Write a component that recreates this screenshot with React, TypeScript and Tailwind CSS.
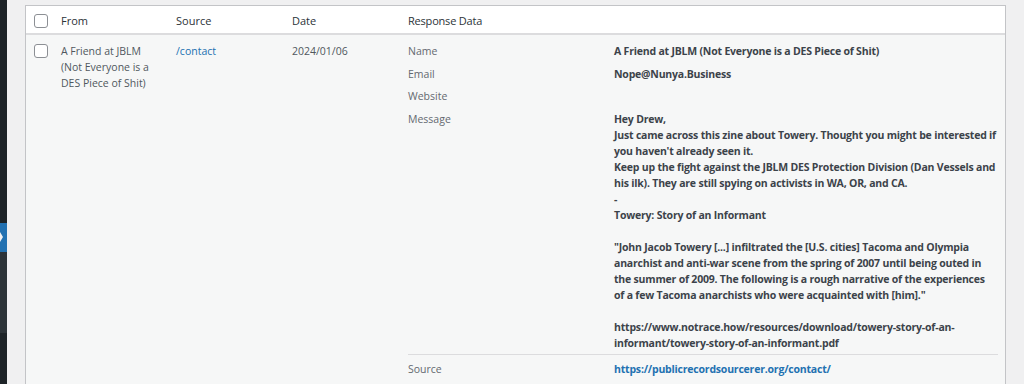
import React from "react";

const msgLines = [
  "Hey Drew,",
  "Just came across this zine about Towery. Thought you might be interested if",
  "you haven't already seen it.",
  "Keep up the fight against the JBLM DES Protection Division (Dan Vessels and",
  "his ilk). They are still spying on activists in WA, OR, and CA.",
  "-",
  "Towery: Story of an Informant",
  "",
  "\"John Jacob Towery [...] infiltrated the [U.S. cities] Tacoma and Olympia",
  "anarchist and anti-war scene from the spring of 2007 until being outed in",
  "the summer of 2009. The following is a rough narrative of the experiences",
  "of a few Tacoma anarchists who were acquainted with [him].\"",
  "",
  "https://www.notrace.how/resources/download/towery-story-of-an-",
  "informant/towery-story-of-an-informant.pdf",
];

function Checkbox() {
  return <div className="w-[14px] h-[14px] rounded-[3px] border border-[#8c8f94] bg-white" />;
}

function Line({ children }: { children: React.ReactNode }) {
  return <div className="h-[16px] whitespace-nowrap">{children}</div>;
}

export default function App() {
  return (
    <div className="w-[1024px] h-[384px] overflow-hidden flex bg-[#f0f0f1] font-['Open_Sans',sans-serif] text-[10.5px] leading-[16px]">
      <div className="w-[7px] shrink-0 flex flex-col">
        <div className="h-[223px] bg-[#1d2327]" />
        <div className="h-[29px] bg-[#2271b1] relative">
          <div className="absolute left-0 top-[9px] w-0 h-0 border-y-[5px] border-y-transparent border-l-[3px] border-l-[#f0f0f1]" />
        </div>
        <div className="h-[81px] bg-[#2c3338]" />
        <div className="flex-1 bg-[#1d2327]" />
      </div>
      <div className="flex-1 pt-[5px] pl-[18px] pr-[18px]">
        <div className="border border-[#c3c4c7] bg-[#f6f7f7] h-[420px]">
          <div className="h-[29px] bg-white border-b-2 border-[#dcdcde] flex text-[#2c3338] text-[11px]">
            <div className="w-[35px] shrink-0 pl-[8px] pt-[8px]">
              <Checkbox />
            </div>
            <div className="w-[115px] shrink-0 pt-[7px]">From</div>
            <div className="w-[116px] shrink-0 pt-[7px]">Source</div>
            <div className="w-[116px] shrink-0 pt-[7px]">Date</div>
            <div className="flex-1 pt-[7px] tracking-[-0.2px]">Response Data</div>
          </div>
          <div className="flex">
            <div className="w-[35px] shrink-0 pl-[8px] pt-[9px]">
              <Checkbox />
            </div>
            <div className="w-[115px] shrink-0 pt-[8px] text-[#50575e]">
              <Line>A Friend at JBLM</Line>
              <Line>(Not Everyone is a</Line>
              <Line>DES Piece of Shit)</Line>
            </div>
            <div className="w-[116px] shrink-0 pt-[8px] text-[#2271b1]">/contact</div>
            <div className="w-[116px] shrink-0 pt-[8px] text-[#50575e]">2024/01/06</div>
            <div className="w-[590px] shrink-0 pt-[8px]">
              <div className="flex pb-[6.67px]">
                <div className="w-[206px] shrink-0 text-[#646970]">Name</div>
                <div className="flex-1 font-bold tracking-[-0.2px] text-[#3c434a] whitespace-nowrap">
                  A Friend at JBLM (Not Everyone is a DES Piece of Shit)
                </div>
              </div>
              <div className="flex pb-[6.67px]">
                <div className="w-[206px] shrink-0 text-[#646970]">Email</div>
                <div className="flex-1 font-bold tracking-[-0.2px] text-[#3c434a]">Nope@Nunya.Business</div>
              </div>
              <div className="flex pb-[6.67px]">
                <div className="w-[206px] shrink-0 text-[#646970]">Website</div>
                <div className="flex-1 h-[16px]" />
              </div>
              <div className="flex pb-[3px] border-b border-[#dcdcde]">
                <div className="w-[206px] shrink-0 text-[#646970]">Message</div>
                <div className="flex-1 font-bold tracking-[-0.2px] text-[#3c434a]">
                  {msgLines.map((l, i) => (
                    <Line key={i}>{l}</Line>
                  ))}
                </div>
              </div>
              <div className="flex pt-[6px]">
                <div className="w-[206px] shrink-0 text-[#646970]">Source</div>
                <div className="flex-1 font-bold tracking-[-0.2px] text-[#2271b1]">
                  https://publicrecordsourcerer.org/contact/
                </div>
              </div>
            </div>
          </div>
        </div>
      </div>
    </div>
  );
}
